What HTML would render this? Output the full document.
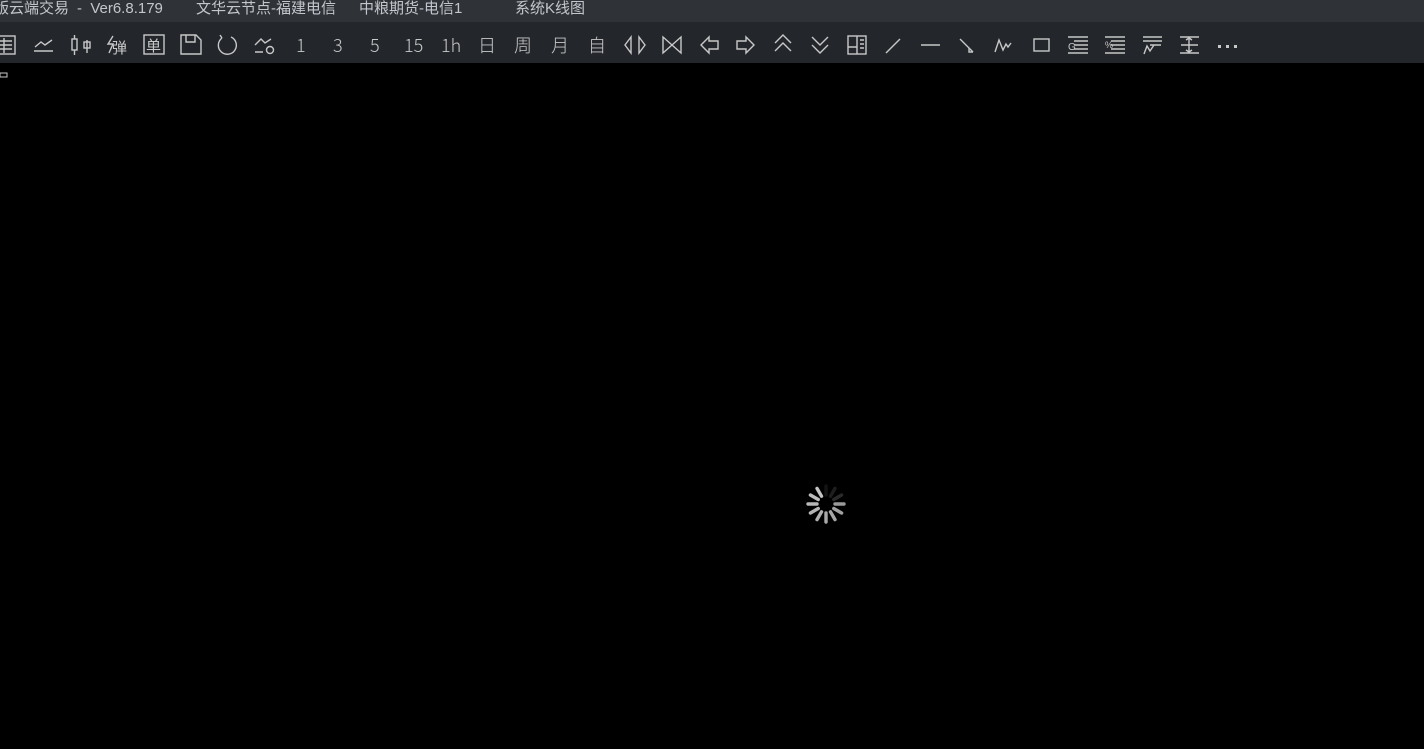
<!DOCTYPE html>
<html><head><meta charset="utf-8"><style>
html,body{margin:0;padding:0;width:1424px;height:749px;background:#000;overflow:hidden;font-family:"Liberation Sans","Noto Sans CJK SC",sans-serif}
#title{position:absolute;left:0;top:0;width:1424px;height:22px;background:#2f3237;color:#c3c7cd;font-size:15px;line-height:17px;white-space:pre}
#title span{position:absolute;top:0}
#tb{position:absolute;left:0;top:22px;width:1424px;height:41px;background:#23262b}
.t{position:absolute;top:31px;color:#c8c8c8;font-size:18px;line-height:28px;font-family:"Noto Sans CJK SC",sans-serif;font-weight:300}
</style></head><body>
<div id="title"><span style="left:-6px">版云端交易</span><span style="left:77px">-&nbsp;&nbsp;Ver6.8.179</span><span style="left:196px">文华云节点-福建电信</span><span style="left:359px">中粮期货-电信1</span><span style="left:515px">系统K线图</span></div>
<div id="tb"></div>
<svg width="1424" height="80" style="position:absolute;left:0;top:0" fill="none" stroke="#c8c8c8" stroke-width="1.4">
<rect x="-4" y="36" width="19" height="18"/><path d="M0 41h12M0 45h12M0 49h12M4 38v15"/>
<path d="M34 51h19M35 47l6-5 4 3 7-5"/>
<rect x="72" y="39" width="5" height="11"/><path d="M74.5 35v4M74.5 50v5M87 40v13"/><rect x="84" y="42" width="6" height="6"/>
<path d="M113 36l-5 8h5l-4 9" /><text x="112" y="53" fill="#c8c8c8" stroke="none" font-size="15" font-family="Noto Sans CJK SC">弹</text>
<rect x="144" y="35" width="20" height="19"/><text x="146" y="51" fill="#c8c8c8" stroke="none" font-size="15" font-family="Noto Sans CJK SC">单</text>
<path d="M181 35h15l5 5v14h-20z"/><path d="M186 35v7h9v-7"/>
<path d="M222 38a9 9 0 1 0 9-1M222 38l-2-3"/>
<path d="M255 45l6-6 4 4 6-4M255 52h8"/><circle cx="270" cy="50" r="3.5"/>
<path d="M631 37l-6 8 6 8zM639 37l6 8-6 8z" />
<path d="M663 37v16l9-8zM681 37v16l-9-8z"/>
<path d="M701 45l8-8v4h9v8h-9v4z"/>
<path d="M754 45l-8-8v4h-9v8h9v4z"/>
<path d="M775 43l8-8 8 8M775 51l8-8 8 8"/>
<path d="M812 37l8 8 8-8M812 45l8 8 8-8"/>
<rect x="848" y="36" width="18" height="18"/><path d="M857 36v18M848 47h9M860 40h4M860 44h4M860 48h4"/>
<path d="M886 53l14-14"/>
<path d="M921 45h19"/>
<path d="M960 39l13 13M973 52h-4v-4"/>
<path d="M995 52l4-12 4 10 3-6 2 3 3-4"/>
<rect x="1034" y="39" width="15" height="12"/>
<path d="M1068 37h20M1074 41h14M1074 45h14M1074 49h14M1068 53h20"/><text x="1068" y="50" fill="#c8c8c8" stroke="none" font-size="10">G</text>
<path d="M1105 37h20M1111 41h14M1111 45h14M1111 49h14M1105 53h20"/><text x="1105" y="48" fill="#c8c8c8" stroke="none" font-size="9">%</text>
<path d="M1143 37h19M1143 41h19M1150 45h11M1144 54l3-8 3 5 4-6"/>
<path d="M1180 37h19M1180 53h19M1181 45h17M1189 37v16M1186 40l3-2 3 2M1186 50l3 2 3-2"/>
<g fill="#c8c8c8" stroke="none"><rect x="1218" y="45" width="3" height="3"/><rect x="1226" y="45" width="3" height="3"/><rect x="1234" y="45" width="3" height="3"/></g>
<rect x="0" y="73" width="7" height="4" stroke-width="1"/>
</svg>
<div class="t" style="left:296px">1</div>
<div class="t" style="left:333px">3</div>
<div class="t" style="left:370px">5</div>
<div class="t" style="left:404px">15</div>
<div class="t" style="left:441px">1h</div>
<div class="t" style="left:478px">日</div>
<div class="t" style="left:514px">周</div>
<div class="t" style="left:551px">月</div>
<div class="t" style="left:588px">自</div>
<svg width="44" height="44" style="position:absolute;left:804px;top:482px" stroke-linecap="round" stroke-width="3.4">
<g transform="translate(22,22)">
<line x1="0" y1="-9" x2="0" y2="-18" stroke="#141414" transform="rotate(0)"/>
<line x1="0" y1="-9" x2="0" y2="-18" stroke="#1e1e1e" transform="rotate(30)"/>
<line x1="0" y1="-9" x2="0" y2="-18" stroke="#2a2a2a" transform="rotate(60)"/>
<line x1="0" y1="-9" x2="0" y2="-18" stroke="#9a9a9a" transform="rotate(90)"/>
<line x1="0" y1="-9" x2="0" y2="-18" stroke="#a0a0a0" transform="rotate(120)"/>
<line x1="0" y1="-9" x2="0" y2="-18" stroke="#a6a6a6" transform="rotate(150)"/>
<line x1="0" y1="-9" x2="0" y2="-18" stroke="#aaaaaa" transform="rotate(180)"/>
<line x1="0" y1="-9" x2="0" y2="-18" stroke="#b0b0b0" transform="rotate(210)"/>
<line x1="0" y1="-9" x2="0" y2="-18" stroke="#b4b4b4" transform="rotate(240)"/>
<line x1="0" y1="-9" x2="0" y2="-18" stroke="#b8b8b8" transform="rotate(270)"/>
<line x1="0" y1="-9" x2="0" y2="-18" stroke="#bcbcbc" transform="rotate(300)"/>
<line x1="0" y1="-9" x2="0" y2="-18" stroke="#c4c4c4" transform="rotate(330)"/>
</g></svg>
</body></html>
